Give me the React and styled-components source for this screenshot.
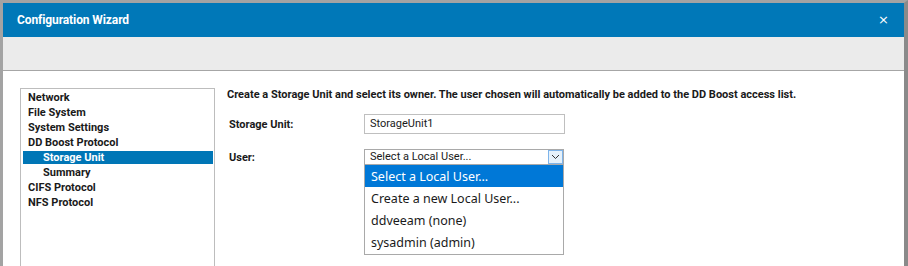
import styled, { createGlobalStyle } from 'styled-components';

const Global = createGlobalStyle`
	html, body {
		margin: 0;
		padding: 0;
		background: #ffffff;
		overflow: hidden;
	}
	body {
		font-family: Roboto, "Liberation Sans", Arial, sans-serif;
	}
`;

const Frame = styled.div`
	width: 908px;
	height: 266px;
	box-sizing: border-box;
	border-top: 3px solid #a3a3a3;
	border-left: 3px solid #a3a3a3;
	border-right: 4px solid #8a8a8a;
	display: flex;
	flex-direction: column;
	overflow: hidden;
	background: #ffffff;
`;

const TitleBar = styled.div`
	height: 34px;
	flex-shrink: 0;
	background: #0078b8;
	color: #ffffff;
	display: flex;
	align-items: center;
	justify-content: space-between;
	padding: 0 15px 0 14px;

	h1 {
		margin: 0;
		font-size: 12px;
		font-weight: 700;
		letter-spacing: -0.1px;
	}
`;

const Close = styled.span`
	font-family: "DejaVu Sans", sans-serif;
	font-size: 13px;
	line-height: 1;
	margin-top: -1px;
`;

const Toolbar = styled.div`
	height: 33px;
	flex-shrink: 0;
	background: #ebebeb;
	border-bottom: 1px solid #a6a6a6;
`;

const Body = styled.div`
	flex: 1;
	display: flex;
	flex-direction: row;
	align-items: flex-start;
	padding: 17px 0 0 17px;
`;

const Nav = styled.ul`
	list-style: none;
	margin: 0;
	padding: 1px 0 0 0;
	width: 195px;
	height: 200px;
	box-sizing: border-box;
	border: 1px solid #bdbdbd;
	flex-shrink: 0;
`;

const NavItem = styled.li`
	font-size: 11px;
	font-weight: 700;
	line-height: ${p => (p.$selected ? '13px' : '15px')};
	height: ${p => (p.$selected ? '13px' : '15px')};
	margin: ${p => (p.$selected ? '1px 1px 1px 2px' : '0')};
	padding-left: ${p => (p.$sub ? 22 : 7) - (p.$selected ? 2 : 0)}px;
	background: ${p => (p.$selected ? '#0076b6' : 'transparent')};
	color: ${p => (p.$selected ? '#ffffff' : '#1a1a1a')};
	white-space: nowrap;
`;

const Panel = styled.div`
	flex: 1;
	margin-left: 12px;
	position: relative;
`;

const Intro = styled.p`
	margin: 0;
	font-size: 11px;
	font-weight: 700;
	color: #1a1a1a;
	line-height: 14px;
	white-space: nowrap;
`;

const Row = styled.div`
	display: flex;
	align-items: center;
	margin-top: ${p => p.$top}px;
	position: relative;
`;

const Label = styled.label`
	width: 137px;
	padding-left: 2px;
	box-sizing: border-box;
	font-size: 11px;
	font-weight: 700;
	color: #1a1a1a;
	flex-shrink: 0;
`;

const TextInput = styled.div`
	width: 201px;
	height: 20px;
	box-sizing: border-box;
	border: 1px solid #bfbfbf;
	font-size: 11px;
	color: #1a1a1a;
	line-height: 18px;
	padding-left: 5px;
`;

const SelectBox = styled.div`
	width: 200px;
	height: 16px;
	box-sizing: border-box;
	border: 1px solid #a9a9a9;
	font-size: 11px;
	color: #1a1a1a;
	line-height: 14px;
	padding-left: 5px;
	display: flex;
	justify-content: space-between;
	position: relative;
`;

const Arrow = styled.span`
	width: 15px;
	height: 14px;
	box-sizing: border-box;
	border: 1px solid #7eb4ea;
	background: #e5f1fb;
	display: flex;
	align-items: center;
	justify-content: center;
`;

const Menu = styled.ul`
	position: absolute;
	left: 137px;
	top: 16px;
	width: 200px;
	box-sizing: border-box;
	margin: 0;
	padding: 0 0 1px 0;
	list-style: none;
	background: #ffffff;
	border: 1px solid #a9a9a9;
	border-top: none;
	font-family: "Noto Sans", "Open Sans", sans-serif;
	font-size: 12.5px;
`;

const MenuItem = styled.li`
	height: 22px;
	line-height: 23px;
	padding-left: 6px;
	white-space: nowrap;
	background: ${p => (p.$active ? '#0078d7' : 'transparent')};
	color: ${p => (p.$active ? '#ffffff' : '#1a1a1a')};
`;

const navItems = [
	{ label: 'Network' },
	{ label: 'File System' },
	{ label: 'System Settings' },
	{ label: 'DD Boost Protocol' },
	{ label: 'Storage Unit', sub: true, selected: true },
	{ label: 'Summary', sub: true },
	{ label: 'CIFS Protocol' },
	{ label: 'NFS Protocol' },
];

const users = ['Select a Local User...', 'Create a new Local User...', 'ddveeam (none)', 'sysadmin (admin)'];

const App = () => (
	<>
		<Global />
		<Frame>
			<TitleBar>
				<h1>Configuration Wizard</h1>
				<Close>×</Close>
			</TitleBar>
			<Toolbar />
			<Body>
				<Nav>
					{navItems.map(item => (
						<NavItem key={item.label} $sub={item.sub} $selected={item.selected}>
							{item.label}
						</NavItem>
					))}
				</Nav>
				<Panel>
					<Intro>
						Create a Storage Unit and select its owner. The user chosen will automatically be added to the DD Boost access list.
					</Intro>
					<Row $top={12}>
						<Label>Storage Unit:</Label>
						<TextInput>StorageUnit1</TextInput>
					</Row>
					<Row $top={15}>
						<Label>User:</Label>
						<SelectBox>
							<span>Select a Local User...</span>
							<Arrow>
								<svg width="9" height="6" viewBox="0 0 9 6">
									<path d="M1 1l3.5 3.5L8 1" fill="none" stroke="#333" strokeWidth="1" />
								</svg>
							</Arrow>
						</SelectBox>
						<Menu>
							{users.map((u, i) => (
								<MenuItem key={u} $active={i === 0}>{u}</MenuItem>
							))}
						</Menu>
					</Row>
				</Panel>
			</Body>
		</Frame>
	</>
);

export default App;
